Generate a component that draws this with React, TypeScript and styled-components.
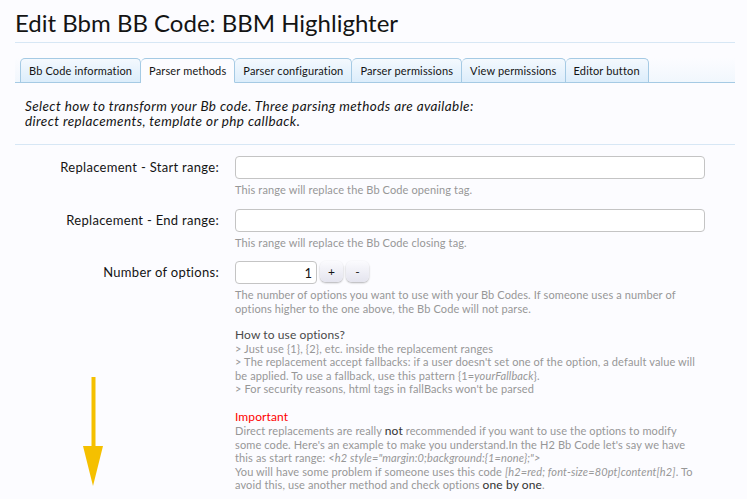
import React from "react";
import styled, { createGlobalStyle } from "styled-components";

const Global = createGlobalStyle`
  html, body { margin: 0; padding: 0; background: #fcfcff; }
  body { font-family: "Trebuchet MS", Lato, "Liberation Sans", sans-serif; color: #141414; }
  * { box-sizing: border-box; }
`;

const Page = styled.div`
  position: relative;
  width: 747px;
  height: 499px;
  overflow: hidden;
  padding: 0 12px 0 15px;
`;

const Title = styled.h1`
  margin: 0;
  padding: 8px 0 4px;
  font-size: 24px;
  line-height: 30px;
  font-weight: normal;
  color: #141414;
  border-bottom: 1px solid #d7e7f5;
`;

const Tabs = styled.ul`
  list-style: none;
  margin: 15px 0 0;
  padding: 0 0 0 5px;
  display: flex;
  height: 25px;
  border-bottom: 1px solid #a5cae4;
  background: linear-gradient(to bottom, #fcfcff 0%, #f1f7fd 100%);
`;

const Tab = styled.li<{ $active?: boolean; $first?: boolean }>`
  padding: 0 8px;
  display: flex;
  align-items: center;
  font-size: 11px;
  letter-spacing: 0.15px;
  color: #141414;
  border: 1px solid #a5cae4;
  border-left-width: ${(p) => (p.$first ? "1px" : "0")};
  border-bottom: ${(p) => (p.$active ? "1px solid #fcfcff" : "none")};
  border-radius: 5px 5px 0 0;
  margin-bottom: ${(p) => (p.$active ? "-1px" : "0")};
  height: ${(p) => (p.$active ? "25px" : "24px")};
  background: ${(p) =>
    p.$active ? "#fcfcff" : "linear-gradient(to bottom, #f4f9fe 0%, #dcedfb 100%)"};
`;

const Intro = styled.p`
  margin: 0;
  padding: 16px 10px 15px;
  font-size: 13.5px;
  line-height: 15px;
  letter-spacing: 0.4px;
  font-style: italic;
  color: #141414;
  border-bottom: 1px solid #d7e7f5;
`;

const Form = styled.div`
  padding-top: 11px;
  display: grid;
  grid-template-columns: 220px 1fr;
  row-gap: 12px;
`;

const Label = styled.div`
  padding-right: 16px;
  text-align: right;
  font-size: 13px;
  letter-spacing: 0.3px;
  line-height: 23px;
  color: #141414;
`;

const Field = styled.div`
  display: flex;
  flex-direction: column;
`;

const TextInput = styled.input<{ $w?: number }>`
  width: ${(p) => p.$w ?? 470}px;
  height: 23px;
  border: 1px solid #c4c4c4;
  border-radius: 4px;
  background: #fff;
  font-family: inherit;
  font-size: 13px;
  padding: 0 4px;
  text-align: ${(p) => (p.$w ? "right" : "left")};
  color: #141414;
  outline: none;
`;

const Spinner = styled.div`
  display: flex;
  align-items: center;
  gap: 3px;
`;

const SpinButton = styled.button`
  width: 23px;
  height: 21px;
  margin-top: -2px;
  border: none;
  border-radius: 6px;
  background: linear-gradient(to bottom, #fbfbfe 0%, #e4e4ee 100%);
  box-shadow: 0 1px 2px rgba(0, 0, 0, 0.3);
  font-family: inherit;
  font-size: 12px;
  color: #141414;
  padding: 0;
`;

const Hint = styled.div`
  margin-top: 4px;
  width: 500px;
  white-space: nowrap;
  font-size: 11px;
  letter-spacing: 0.12px;
  line-height: 13.5px;
  color: #979797;
`;

const HintHeading = styled.div<{ $red?: boolean }>`
  font-size: 12px;
  line-height: 15px;
  letter-spacing: 0.1px;
  color: ${(p) => (p.$red ? "#ff0000" : "#4a4a4a")};
  margin-top: ${(p) => (p.$red ? "13.5px" : "11.5px")};
`;

const Strong = styled.span`
  color: #333;
  font-size: 12px;
`;

const Arrow = styled.svg`
  position: absolute;
  left: 82px;
  top: 377px;
`;

export default function App() {
  return (
    <Page>
      <Global />
      <Title>Edit Bbm BB Code: BBM Highlighter</Title>
      <Tabs>
        <Tab $first>Bb Code information</Tab>
        <Tab $active>Parser methods</Tab>
        <Tab>Parser configuration</Tab>
        <Tab>Parser permissions</Tab>
        <Tab>View permissions</Tab>
        <Tab>Editor button</Tab>
      </Tabs>
      <Intro>
        Select how to transform your Bb code. Three parsing methods are available:
        <br />
        direct replacements, template or php callback.
      </Intro>
      <Form>
        <Label>Replacement - Start range:</Label>
        <Field>
          <TextInput />
          <Hint>This range will replace the Bb Code opening tag.</Hint>
        </Field>
        <Label>Replacement - End range:</Label>
        <Field>
          <TextInput />
          <Hint>This range will replace the Bb Code closing tag.</Hint>
        </Field>
        <Label>Number of options:</Label>
        <Field>
          <Spinner>
            <TextInput $w={82} defaultValue="1" />
            <SpinButton>+</SpinButton>
            <SpinButton>-</SpinButton>
          </Spinner>
          <Hint>
            The number of options you want to use with your Bb Codes. If someone uses a number of
            <br />
            options higher to the one above, the Bb Code will not parse.
            <HintHeading>How to use options?</HintHeading>
            &gt; Just use {"{1}"}, {"{2}"}, etc. inside the replacement ranges
            <br />
            &gt; The replacement accept fallbacks: if a user doesn't set one of the option, a default value will
            <br />
            be applied. To use a fallback, use this pattern {"{1="}<i>yourFallback</i>{"}"}.
            <br />
            &gt; For security reasons, html tags in fallBacks won't be parsed
            <HintHeading $red>Important</HintHeading>
            Direct replacements are really <Strong>not</Strong> recommended if you want to use the options to modify
            <br />
            some code. Here's an example to make you understand.In the H2 Bb Code let's say we have
            <br />
            this as start range: <i>&lt;h2 style="margin:0;background:{"{1=none}"};"&gt;</i>
            <br />
            You will have some problem if someone uses this code <i>[h2=red; font-size=80pt]content[h2]</i>. To
            <br />
            avoid this, use another method and check options <Strong>one by one</Strong>.
          </Hint>
        </Field>
      </Form>
      <Arrow width="22" height="110" viewBox="0 0 22 110">
        <rect x="9.5" y="0" width="4" height="70" fill="#f5c000" />
        <polygon points="1,69 21,69 11,109" fill="#f5c000" />
      </Arrow>
    </Page>
  );
}
